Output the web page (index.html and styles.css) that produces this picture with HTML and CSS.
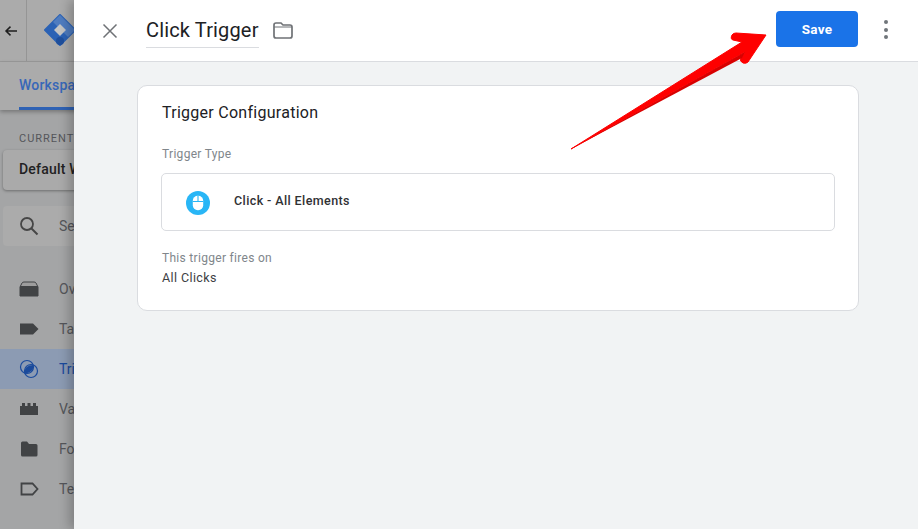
FILE: index.html
```html
<!DOCTYPE html>
<html lang="en">
<head>
<meta charset="utf-8">
<title>Click Trigger</title>
<link rel="stylesheet" href="styles.css">
</head>
<body>
<div class="page">
  <aside class="behind">
    <div class="topbar">
      <div class="back">
        <svg width="14" height="14" viewBox="0 0 14 14"><path d="M13 7H2.5M6.5 2.6 2 7l4.500 4.400" fill="none" stroke="#1f1f1f" stroke-width="1.500"/></svg>
      </div>
      <div class="logo">
        <svg width="32" height="32" viewBox="0 0 32 32">
          <path d="M16 1 31 16 16 31 1 16Z" fill="#2b62b5" stroke="#2b62b5" stroke-width="2" stroke-linejoin="round"/>
          <path d="M16 1 31 16 24 23 9 8Z" fill="#4f7cc0"/>
          <circle cx="16" cy="27" r="4" fill="#1f4f9c"/>
          <path d="M16 10 22 16 16 22 10 16Z" fill="#c4c4c4"/>
        </svg>
      </div>
    </div>
    <div class="tabs"><span class="tab">Workspace</span></div>
    <div class="side">
      <div class="caption">CURRENT WORKSPACE</div>
      <div class="ws-card">Default Workspace</div>
      <div class="search">
        <svg width="22" height="22" viewBox="0 0 22 22"><circle cx="9" cy="9" r="6" fill="none" stroke="#464646" stroke-width="1.800"/><path d="m13.500 13.500 6 6" stroke="#464646" stroke-width="2"/></svg>
        <span>Search</span>
      </div>
      <nav class="nav">
        <div class="nav-row">
          <svg width="20" height="16" viewBox="0 0 20 16"><path d="M1 15V6l2-4q.5-1 2-1h10q1.500 0 2 1l2 4v9Z" fill="#9d9d9d" stroke="#414345" stroke-width="1"/><path d="M1 5h18v10H1Z" fill="#414345"/></svg>
          <span>Overview</span>
        </div>
        <div class="nav-row">
          <svg width="20" height="14" viewBox="0 0 20 14"><path d="M1 1.500h13L19.500 7 14 12.500H1Z" fill="#414345"/></svg>
          <span>Tags</span>
        </div>
        <div class="nav-row active">
          <svg width="20" height="20" viewBox="0 0 20 20"><circle cx="8" cy="8" r="6.500" fill="none" stroke="#1a4a9c" stroke-width="1.200"/><circle cx="12" cy="12" r="6.500" fill="none" stroke="#1a4a9c" stroke-width="1.200"/><path d="M14.500 6q0 8-9 8.500Q5 6 14.500 6Z" fill="#1a4a9c"/></svg>
          <span>Triggers</span>
        </div>
        <div class="nav-row">
          <svg width="20" height="14" viewBox="0 0 20 14"><path d="M1 13V4h2V1h3v3h2.500V1h3v3H14V1h3v3h2v9Z" fill="#414345"/></svg>
          <span>Variables</span>
        </div>
        <div class="nav-row">
          <svg width="20" height="16" viewBox="0 0 20 16"><path d="M2 2q0-1.500 1.500-1.500h4.500L10 3h7q1.500 0 1.500 1.500V14q0 1.500-1.500 1.500H3.500Q2 15.500 2 14Z" fill="#414345"/></svg>
          <span>Folders</span>
        </div>
        <div class="nav-row">
          <svg width="20" height="14" viewBox="0 0 20 14"><path d="M2.500 1.500h11L18.500 7l-5 5.500h-11Z" fill="none" stroke="#414345" stroke-width="1.800"/></svg>
          <span>Templates</span>
        </div>
      </nav>
    </div>
  </aside>

  <main class="panel">
    <header class="head">
      <button class="close" aria-label="Close">
        <svg width="16" height="16" viewBox="0 0 16 16"><path d="m1.500 1.500 13 13m0-13-13 13" stroke="#6f7276" stroke-width="1.500"/></svg>
      </button>
      <div class="title">Click Trigger</div>
      <svg class="folder" width="20" height="17" viewBox="0 0 20 17"><path d="M1 3q0-2 2-2h5l2 2h7q2 0 2 2v9q0 2-2 2H3q-2 0-2-2Z" fill="none" stroke="#6f7276" stroke-width="1.700"/><path d="M1 5h18" stroke="#6f7276" stroke-width="1"/></svg>
      <button class="save">Save</button>
      <div class="more"><i></i><i></i><i></i></div>
    </header>
    <section class="body">
      <div class="card">
        <h2>Trigger Configuration</h2>
        <div class="label">Trigger Type</div>
        <div class="type-box">
          <svg width="24" height="24" viewBox="0 0 24 24"><circle cx="12" cy="12" r="12" fill="#29b6f6"/><rect x="6.800" y="4.800" width="10.400" height="14.400" rx="5" fill="#fff"/><path d="M6.800 10.500h10.400M12 4.800v5.700" stroke="#29b6f6" stroke-width="1.100"/></svg>
          <span>Click - All Elements</span>
        </div>
        <div class="label fires">This trigger fires on</div>
        <div class="value">All Clicks</div>
      </div>
    </section>
  </main>

  <svg class="arrow" width="210" height="130" viewBox="0 0 210 130">
    <path d="M1 119 172 12 163 10Q160 9 162 5 163 3 166 3L196 5 178 32Q176 34 173 33 169 31 171 28L175 22Z" fill="#fe0000" stroke="#fe0000" stroke-width="1" stroke-linejoin="round"/>
    <path d="M1 119 175 22 172 28 Z" fill="#d80000"/>
  </svg>
</div>
</body>
</html>
```

FILE: styles.css
```css
* { box-sizing: border-box; }
html, body { margin: 0; height: 100%; }
body { font-family: Roboto, "Liberation Sans", sans-serif; overflow: hidden; }
.page { position: relative; display: flex; width: 918px; height: 529px; overflow: hidden; }

.behind { width: 74px; flex: none; overflow: hidden; background: #a4a5a6; color: #4c4c4c; }
.topbar { display: flex; height: 62px; width: 200px; background: #ababab; border-bottom: 1px solid #9a9a9a; }
.back { width: 27px; border-right: 1px solid #959595; display: flex; align-items: center; justify-content: center; padding-right: 4px; }
.logo { padding: 14px 0 0 17px; }
.tabs { height: 48px; width: 200px; padding-left: 19px; background: #ababab; box-shadow: 0 2px 4px rgba(0,0,0,.28); position: relative; }
.tab { display: inline-block; height: 48px; padding: 15px 2px 0 0; font-size: 14px; font-weight: 500; color: #3767b8; letter-spacing: .2px; border-bottom: 3px solid #2f62b4; width: 120px; }
.side { width: 300px; padding: 22px 0 0 3px; }
.caption { padding-left: 16px; height: 14px; font-size: 11px; line-height: 14px; letter-spacing: 1px; color: #55565a; white-space: nowrap; }
.ws-card { width: 200px; height: 40px; margin-top: 4px; padding-left: 16px; line-height: 38px; font-size: 14px; font-weight: 500; color: #222; background: #aaaaaa; border-radius: 4px; box-shadow: 0 1px 3px rgba(0,0,0,.35); letter-spacing: .2px; }
.search { display: flex; align-items: center; width: 200px; height: 40px; margin-top: 16px; padding-left: 15px; gap: 19px; background: #ababab; border-radius: 4px; font-size: 14px; color: #55565a; }
.nav { margin: 23px 0 0 -3px; }
.nav-row { display: flex; align-items: center; height: 40px; padding-left: 19px; gap: 20px; font-size: 14px; color: #55565a; font-weight: 400; }
.nav-row svg { flex: none; }
.nav-row.active { background: #8c9bb3; color: #1a4a9c; }

.panel { flex: 1; display: flex; flex-direction: column; position: relative; background: #f1f3f4; box-shadow: -5px 0 10px rgba(0,0,0,.22); }
.head { display: flex; align-items: center; height: 62px; flex: none; background: #fff; border-bottom: 1px solid #dadce0; }
.close { width: 20px; height: 20px; padding: 2px; margin: 0 0 0 26px; border: 0; background: none; display: flex; }
.title { margin-left: 26px; width: 113px; height: 36px; padding-top: 5px; font-size: 20px; line-height: 26px; letter-spacing: .15px; color: #202124; border-bottom: 1px solid #dadce0; white-space: nowrap; transform: translateY(-1px); }
.folder { margin-left: 14px; }
.save { margin-left: auto; width: 82px; height: 36px; border: 0; border-radius: 4px; background: #1a73e8; color: #fff; font: 700 13.500px Roboto, sans-serif; letter-spacing: .2px; margin-bottom: 4px; }
.more { width: 60px; padding-right: 4px; display: flex; flex-direction: column; align-items: center; gap: 3.500px; margin-bottom: 2px; }
.more i { width: 4px; height: 4px; border-radius: 50%; background: #70757a; }

.body { flex: 1; padding: 23px 59px 0 63px; }
.card { height: 226px; background: #fff; border: 1px solid #dadce0; border-radius: 10px; padding: 16px 23px 0 24px; }
.card h2 { margin: 0; font-size: 16px; line-height: 22px; font-weight: 400; color: #202124; letter-spacing: .27px; }
.label { font-size: 12px; line-height: 16px; color: #80868b; letter-spacing: .3px; }
.card h2 + .label { margin-top: 22px; }
.type-box { display: flex; align-items: center; height: 58px; margin: 11px 0 0 -1px; padding: 0 0 0 24px; gap: 24px; border: 1px solid #dadce0; border-radius: 5px; }
.type-box svg { flex: none; margin-top: 2px; }
.type-box span { font-size: 12.500px; font-weight: 500; color: #303134; letter-spacing: .4px; margin-top: -3px; }
.fires { margin-top: 19px; }
.value { margin-top: 4px; font-size: 12.500px; line-height: 16px; color: #3c4043; letter-spacing: .4px; }

.arrow { position: absolute; left: 570px; top: 30px; }
```
